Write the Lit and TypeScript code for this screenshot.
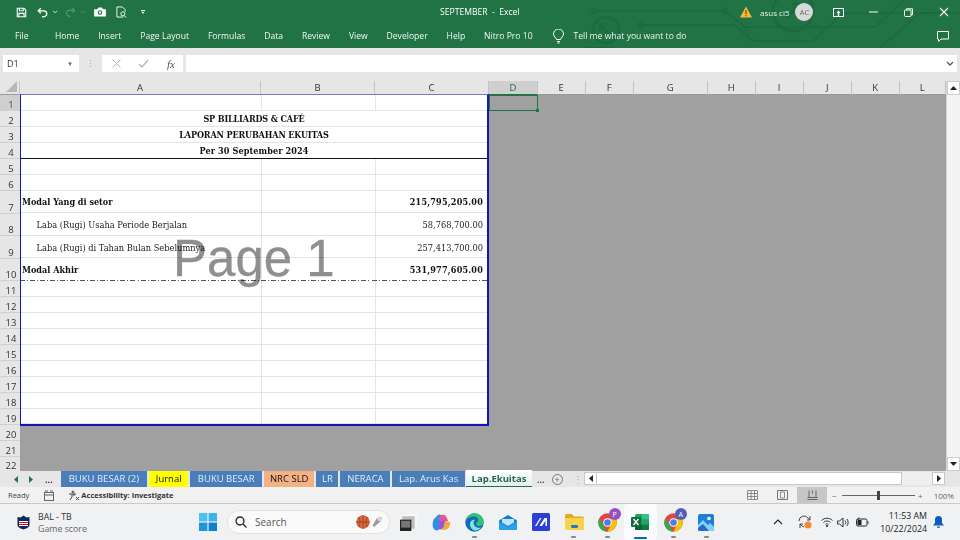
import { LitElement, html, css, svg } from "lit";
import { customElement } from "lit/decorators.js";

const COLS: [string, number][] = [["A",241],["B",114],["C",114],["D",48.7],["E",48],["F",48],["G",74],["H",48],["I",48],["J",48],["K",48],["L",46.300]];
type Row = { h:number; t?:string; a?:string; c?:string; b?:boolean; ind?:boolean; cls?:string };
const ROWS: Row[] = [
  {h:16},{h:16,t:"SP BILLIARDS & CAFÉ",cls:"caps"},{h:16,t:"LAPORAN PERUBAHAN EKUITAS",cls:"caps"},{h:16,t:"Per 30 September 2024",cls:"under"},
  {h:16},{h:16},
  {h:22.5,a:"Modal Yang di setor",c:"215,795,205.00",b:true},
  {h:22.5,a:"Laba (Rugi) Usaha Periode Berjalan",c:"58,768,700.00",ind:true},
  {h:22.5,a:"Laba (Rugi) di Tahan Bulan Sebelumnya",c:"257,413,700.00",ind:true},
  {h:22.5,a:"Modal Akhir",c:"531,977,605.00",b:true,cls:"dash"},
  {h:16},{h:16},{h:16},{h:16},{h:16},{h:16},{h:16},{h:16},{h:15},
];
const TABS = [
  ["BUKU BESAR (2)","blue",86.300],["Jurnal","yellow",39.500],["BUKU BESAR","blue",71.500],["NRC SLD","peach",50.500],
  ["LR","blue",22],["NERACA","blue",50],["Lap. Arus Kas","blue",72.500],["Lap.Ekuitas","active",66],
] as [string,string,number][];
const MENU = ["File","Home","Insert","Page Layout","Formulas","Data","Review","View","Developer","Help","Nitro Pro 10"];

@customElement("app-root")
export class AppRoot extends LitElement {
  static styles = css`
    :host{display:block;width:960px;height:540px;overflow:hidden;font-family:"Open Sans","Noto Sans",sans-serif;color:#222;background:#e6e6e6}
    *{box-sizing:border-box}
    svg{display:block;flex:none}
    .chrome{position:relative;background:#217346;height:48px;color:#fff;overflow:hidden}
    .circuit{position:absolute;left:0;top:0;pointer-events:none}
    .title{position:relative;height:24px;display:flex;align-items:center;padding-left:16px}
    .qat{display:flex;align-items:center;width:416px;flex:none}
    .qat svg{margin-right:var(--m,0)}
    .doc{font-size:8.6px;width:112px;flex:none;white-space:pre;padding-left:8px}
    .right{flex:1;display:flex;align-items:center;padding-left:196px}
    .user{font-size:8px;margin-left:8px;color:#e8f1ec;white-space:nowrap}
    .avatar{width:18px;height:18px;border-radius:50%;background:#d9d9d9;color:#666;font-size:7.5px;display:flex;align-items:center;justify-content:center;margin:0 0 0 6px;flex:none}
    .winbtns{display:flex;align-items:center;margin-left:8px}
    .winbtns div{width:35px;display:flex;justify-content:center}
    .menu{position:relative;height:24px;display:flex;align-items:center;padding-left:15px;font-size:8.6px;gap:18.9px;white-space:nowrap;color:#f2f7f4}
    .menu .file{margin-right:7.500px}
    .tell{display:flex;align-items:center;gap:8px;margin-left:1px;color:#eaf3ee}
    .cmt{position:absolute;right:11px;top:7px}
    .fbar{height:33px;display:flex;align-items:flex-start;padding:7px 3px 0 3px}
    .namebox{width:76px;height:17px;background:#fff;font-size:9px;display:flex;align-items:center;justify-content:space-between;padding:0 6px 0 4px;color:#333}
    .caret{font-size:6px;color:#666}
    .dots{width:23px;height:17px;display:flex;align-items:center;justify-content:center;color:#aaa;font-size:9px}
    .fbtns{width:81px;height:17px;background:#fff;display:flex;align-items:center;padding-left:10px;margin-right:3px}
    .fx{font:italic 11px "Liberation Serif",serif;color:#555;margin-left:18px}
    .finput{flex:1;height:17px;background:#fff;display:flex;align-items:center;justify-content:flex-end;padding-right:3px}
    .sheet{display:flex;height:390px;overflow:hidden}
    .main{flex:1;min-width:0;display:flex;flex-direction:column}
    .rowhead{width:20px;flex:none;background:#e6e6e6;display:flex;flex-direction:column;overflow:hidden}
    .corner{height:14px;flex:none;position:relative;border-bottom:1px solid #999;border-right:1px solid #c8c8c8}
    .corner i{position:absolute;right:2px;bottom:2px;width:0;height:0;border-left:11px solid transparent;border-bottom:11px solid #b9b9b9}
    .rh{flex:none;display:flex;align-items:flex-end;justify-content:center;font-size:9.5px;line-height:11px;color:#333;border-bottom:1px solid #d0d0d0;background:#e6e6e6;padding-left:2px}
    .rh.sel{background:#cfcfcf;color:#1f6b41}
    .rh.clip{border-bottom:0}
    .colhead{height:14px;display:flex;flex:none}
    .ch{flex:none;font-size:9.5px;line-height:13px;text-align:center;color:#333;background:#e6e6e6;border-right:1px solid #c4c4c4;border-bottom:1px solid #999}
    .ch.sel{background:#cfcfcf;border-bottom-color:#217346;color:#1f6b41}
    .body{position:relative;flex:1;background:#a0a0a0;min-height:0}
    .page{width:469px;margin-top:-1.500px;background:#fff;border:2px solid #1616b4;border-left-width:1.500px;border-top:1.500px solid #7a78c2;position:relative;font-family:"DejaVu Serif","Liberation Serif",serif;font-stretch:condensed;font-size:9.2px;color:#222}
    .r{display:grid;grid-template-columns:241px 114px 1fr;border-bottom:1px solid #e4e4e4;align-items:stretch}
    .r.merged{display:flex;justify-content:center;align-items:center;font-weight:700;font-size:9px;padding-top:2px;letter-spacing:.1px;color:#111}
    .r.caps{letter-spacing:-.15px}
    .r.under{border-bottom:1.500px solid #111}
    .r.dash{border-bottom:1px solid transparent;border-image:repeating-linear-gradient(90deg,#555 0 5px,transparent 5px 7px,#555 7px 8px,transparent 8px 10px) 1}
    .c{display:flex;align-items:center;border-right:1px solid #e4e4e4;padding:2px 1px 0;white-space:nowrap;min-width:0}
    .c:last-child{border-right:0;justify-content:flex-end;padding-right:4px}
    .bold{font-weight:700;font-size:9px;color:#111}
    .bold.num{letter-spacing:.2px}
    .ind{padding-left:15.500px}
    .wm{position:absolute;left:152px;top:134px;font:51px/60px "Liberation Sans",sans-serif;color:#8f8f8f;-webkit-text-stroke:.3px #8f8f8f;white-space:nowrap;pointer-events:none;mix-blend-mode:multiply}
    .cursor{position:absolute;left:469px;top:-.500px;width:49px;height:16.500px;border:1px solid #217346}
    .cursor::after{content:"";position:absolute;right:-2px;bottom:-2px;width:3px;height:3px;background:#217346}
    .vscroll{width:14px;flex:none;background:#f4f4f4;display:flex;flex-direction:column;justify-content:space-between;border-left:1px solid #d6d6d6}
    .arrowb{height:14px;background:#fff;display:flex;align-items:center;justify-content:center;border:1px solid #ccc}
    .tabs{height:16px;background:#e6e6e6;display:flex;align-items:stretch;position:relative}
    .nav{width:60.700px;flex:none;display:flex;align-items:center;padding-left:14px;gap:11px;font-size:10px;color:#333}
    .tab{flex:none;margin-right:2px;display:flex;align-items:center;justify-content:center;font-size:9.500px;color:#111;white-space:nowrap;padding-bottom:1.500px}
    .tab.blue{background:#4a7ebb;color:#e3ebf5}
    .tab.yellow{background:#ffff00}
    .tab.peach{background:#f4b183}
    .tab.active{background:linear-gradient(#fff,#e4edf6);color:#1e6b41;font-weight:700;border-bottom:1.500px solid #217346;margin-top:-1px;height:17px;margin-left:-1px;padding-bottom:0}
    .tabend{display:flex;align-items:center;font-size:10px;color:#444;margin-left:3px;gap:7px}
    .plus{width:11px;height:11px;border:1px solid #777;border-radius:50%;display:flex;align-items:center;justify-content:center;font-size:9px;line-height:1;color:#666}
    .hscroll{position:absolute;left:584px;right:15px;top:1px;height:13px;display:flex}
    .hb{width:13px;background:#fff;border:1px solid #c8c8c8;display:flex;align-items:center;justify-content:center}
    .ht{width:305px;background:#fff;border:1px solid #c8c8c8;border-left:0}
    .ha{flex:1;background:#efefef}
    .status{height:17px;background:#f1f1f1;border-bottom:1px solid #c9c9c9;display:flex;align-items:center;font-size:7.500px;color:#444;padding-left:8px;position:relative}
    .acc{display:flex;align-items:center;gap:1px;margin-left:14px;font-weight:700;color:#333;font-size:7.500px}
    .views{position:absolute;left:737px;top:0;height:16px;display:flex}
    .views div{width:30px;display:flex;align-items:center;justify-content:center;height:16px}
    .views .on{background:#c6c6c6}
    .zoom{position:absolute;left:832px;top:0;height:16px;display:flex;align-items:center;width:122px;color:#666;font-size:8px}
    .track{width:74px;height:1px;background:#666;margin:0 3px 0 5px;position:relative;border-top:1px solid #666}
    .track i{position:absolute;left:35px;top:-5px;width:3px;height:9px;background:#444}
    .pct{margin-left:11px}
    .taskbar{height:36px;background:#eff1f3;display:flex;align-items:center;position:relative}
    .score{display:flex;align-items:center;width:199px;flex:none;padding-left:17px;gap:8px;font-size:8.800px;color:#333;line-height:12px;padding-top:1px}
    .score small{display:block;font-size:8.800px;color:#666}
    .search{width:163px;height:24px;flex:none;background:#fafafa;border:1px solid #e2e2e2;border-radius:12px;display:flex;align-items:center;padding-left:7px;gap:8px;font-size:10px;color:#555;margin-left:10px}
    .search .deco{margin-left:auto;margin-right:6px;display:flex;align-items:center;gap:1px}
    .tk{width:33.100px;height:36px;flex:none;display:flex;align-items:center;justify-content:center;position:relative}
    .tk.first{margin-left:2px}
    .tk.run::after{content:"";position:absolute;bottom:2px;left:14px;width:5px;height:2px;border-radius:1px;background:#888}
    .tk.act{background:#fafbfc;border-radius:4px}
    .tk.act::after{content:"";position:absolute;bottom:1px;left:10px;width:13px;height:2.500px;border-radius:1px;background:#0067c0}
    .tray{position:absolute;left:768px;top:0;height:36px;display:flex;align-items:center}
    .tray>svg{margin-right:var(--m,0)}
    .clock{position:absolute;left:111px;width:48px;top:6px;text-align:right;font-size:8.800px;line-height:12.500px;color:#222;white-space:nowrap}
    .bell{position:absolute;left:933px;top:12px}
    .badge{position:absolute;left:18px;top:4px;width:12px;height:12px;border-radius:50%;color:#fff;font-size:7px;display:flex;align-items:center;justify-content:center}
  `;

  circuit(){
    return svg`<svg class="circuit" width="960" height="48" viewBox="0 0 960 48" fill="none" stroke="#1c6a3f" stroke-width="1.600">
      <path d="M596 11H725l20 16h130l30-27"/><path d="M640 25h95l18 16h60l30-28h90"/><path d="M880 48l40-35h40"/>
      <circle cx="592" cy="11" r="2.500"/><circle cx="725" cy="11" r="2.500"/><circle cx="641" cy="25" r="2.500"/><circle cx="746" cy="32" r="2.500"/>
      <circle cx="606" cy="30" r="13" stroke-width="2.500"/><path d="M612 36l-12-12m0 7v-7h7" stroke-width="2"/>
      <circle cx="793" cy="11" r="20" stroke-width="3"/><path d="M786 18l14-14m-8 0h8v8" stroke-width="2.500"/>
      <path d="M585 48h30" /></svg>`;
  }
  qat(){
    return html`<div class="qat">
      <svg width="11" height="11" viewBox="0 0 13 13" fill="none" stroke="#fff" stroke-width="1.300" style="--m:10px"><path d="M1.500 1.500h8l2 2v8h-10z"/><path d="M4 1.500v3h4.500v-3M3.500 11.500v-4h6v4"/></svg>
      <svg width="11" height="11" viewBox="0 0 13 12" fill="none" stroke="#fff" stroke-width="1.600"><path d="M4.500 1L1.500 4l3 3"/><path d="M2 4h6a3.500 3.500 0 0 1 0 7H6"/></svg>
      <svg width="6" height="4" viewBox="0 0 7 5" fill="none" stroke="#fff" style="--m:7px;margin-left:4px"><path d="M1 1l2.500 2.500L6 1"/></svg>
      <svg width="11" height="10" viewBox="0 0 13 12" fill="none" stroke="#4f9a72" stroke-width="1.300"><path d="M8.500 1l3 3-3 3"/><path d="M11 4H5a3.500 3.500 0 0 0 0 7h2"/></svg>
      <svg width="6" height="4" viewBox="0 0 7 5" fill="none" stroke="#4f9a72" style="--m:8px;margin-left:4px"><path d="M1 1l2.500 2.500L6 1"/></svg>
      <svg width="12" height="10" viewBox="0 0 13 11" style="--m:10px"><path fill="#fff" d="M0 2.500h3.500L5 .5h3.500l1.500 2h3v8H0z"/><circle cx="6.500" cy="6" r="2.400" fill="#217346"/><circle cx="6.500" cy="6" r="1.200" fill="#fff"/></svg>
      <svg width="11" height="12" viewBox="0 0 12 13" fill="none" stroke="#fff" stroke-width="1"><path d="M8 12H1V1h6l3 3v2"/><circle cx="7.500" cy="8.500" r="2.200"/><path d="M9 10.500l2 2"/></svg>
      <svg width="4" height="5" viewBox="0 0 5 6" style="margin-left:14px"><path fill="#fff" d="M0 0h5v1H0zM.5 2h4L2.500 5z"/></svg>
    </div>`;
  }
  render(){
    return html`
    <div class="chrome">
      ${this.circuit()}
      <div class="title">
        ${this.qat()}
        <div class="doc">SEPTEMBER  -  Excel</div>
        <div class="right">
          <svg width="12" height="12" viewBox="0 0 12 12"><path fill="#f6b73c" d="M6 .5L12 11.500H0z"/><path fill="#7a4b00" d="M5.400 4h1.200v4.200H5.400zM5.400 9h1.200v1.200H5.400z"/></svg>
          <span class="user">asus ci5</span>
          <div class="avatar">AC</div>
          <div class="winbtns">
            <div><svg width="11" height="9" viewBox="0 0 11 9" fill="none" stroke="#fff"><rect x=".5" y=".5" width="10" height="8"/><path fill="#fff" d="M5.500 2.500L3.500 5h1.300v3h1.400V5h1.300z" stroke="none"/></svg></div>
            <div><svg width="9" height="2" viewBox="0 0 9 2"><path stroke="#fff" d="M0 1h9"/></svg></div>
            <div><svg width="9" height="9" viewBox="0 0 9 9" fill="none" stroke="#fff"><rect x=".5" y="2" width="6.500" height="6.500" rx="1"/><path d="M2.500 2V.8h6v6H7"/></svg></div>
            <div><svg width="10" height="10" viewBox="0 0 10 10" stroke="#fff" stroke-width="1.100"><path d="M1 1l8 8M9 1l-8 8"/></svg></div>
          </div>
        </div>
      </div>
      <div class="menu">
        ${MENU.map((m,i)=>html`<span class=${i===0?"file":""}>${m}</span>`)}
        <div class="tell">
          <svg width="13" height="15" viewBox="0 0 13 15" fill="none" stroke="#fff"><path d="M4.500 10.500C4 8.500 1.500 7.500 1.500 5a5 5 0 0 1 10 0c0 2.500-2.500 3.500-3 5.500z"/><path d="M5 12.500h3M5.500 14h2"/></svg>
          <span>Tell me what you want to do</span>
        </div>
        <svg class="cmt" width="12" height="11" viewBox="0 0 12 11" fill="none" stroke="#fff"><path d="M.5.5h11v7.500H4L1.500 10.500V8H.5z"/></svg>
      </div>
    </div>
    <div class="fbar">
      <div class="namebox"><span>D1</span><span class="caret">▼</span></div>
      <div class="dots">⋮</div>
      <div class="fbtns">
        <svg width="9" height="9" viewBox="0 0 9 9" stroke="#b5b5b5"><path d="M.5.5l8 8M8.500.5l-8 8"/></svg>
        <svg style="margin-left:17px" width="11" height="9" viewBox="0 0 11 9" fill="none" stroke="#b5b5b5" stroke-width="1.200"><path d="M1 5l3 3 6-7"/></svg>
        <span class="fx">fx</span>
      </div>
      <div class="finput"><svg width="8" height="5" viewBox="0 0 8 5" fill="none" stroke="#555" stroke-width="1.300"><path d="M1 1l3 3 3-3"/></svg></div>
    </div>
    <div class="sheet">
      <div class="rowhead">
        <div class="corner"><i></i></div>
        ${ROWS.map((r,i)=>html`<div class="rh ${i===0?"sel":""}" style="height:${i===18?16:r.h}px">${i+1}</div>`)}
        ${[20,21].map((n)=>html`<div class="rh" style="height:16px">${n}</div>`)}
        <div class="rh clip" style="height:14px">22</div>
      </div>
      <div class="main">
        <div class="colhead">
          ${COLS.map(([n,w])=>html`<div class="ch ${n==="D"?"sel":""}" style="width:${w}px">${n}</div>`)}
        </div>
        <div class="body">
          <div class="page">
            ${ROWS.map(r=> r.t
              ? html`<div class="r merged ${r.cls||""}" style="height:${r.h}px">${r.t}</div>`
              : html`<div class="r ${r.cls||""}" style="height:${r.h}px">
                  <div class="c ${r.b?"bold":""} ${r.ind?"ind":""}">${r.a||""}</div>
                  <div class="c"></div>
                  <div class="c ${r.b?"bold":""} num">${r.c||""}</div>
                </div>`)}
            <div class="wm">Page 1</div>
          </div>
          <div class="cursor"></div>
        </div>
      </div>
      <div class="vscroll">
        <div class="arrowb"><svg width="7" height="4" viewBox="0 0 7 4"><path d="M3.500 0L7 4H0z" fill="#222"/></svg></div>
        <div class="arrowb"><svg width="7" height="4" viewBox="0 0 7 4"><path d="M0 0h7L3.500 4z" fill="#222"/></svg></div>
      </div>
    </div>
    <div class="tabs">
      <div class="nav"><svg width="4" height="7" viewBox="0 0 4 7"><path d="M4 0v7L0 3.500z" fill="#217346"/></svg><svg width="4" height="7" viewBox="0 0 4 7"><path d="M0 0v7l4-3.500z" fill="#217346"/></svg><span style="font-weight:700;font-size:9px;margin-left:1px">...</span></div>
      ${TABS.map(([n,c,w])=>html`<div class="tab ${c}" style="width:${w}px">${n}</div>`)}
      <div class="tabend"><span style="font-weight:700;font-size:9px">...</span><span class="plus">+</span><span style="color:#aaa;margin-left:3px">⋮</span></div>
      <div class="hscroll">
        <div class="hb"><svg width="4" height="7" viewBox="0 0 4 7"><path d="M4 0v7L0 3.500z" fill="#222"/></svg></div>
        <div class="ht"></div><div class="ha"></div>
        <div class="hb"><svg width="4" height="7" viewBox="0 0 4 7"><path d="M0 0v7l4-3.500z" fill="#222"/></svg></div>
      </div>
    </div>
    <div class="status">
      <span>Ready</span>
      <svg style="margin-left:15px" width="10" height="11" viewBox="0 0 10 11" fill="none" stroke="#666"><rect x=".5" y="2.500" width="9" height="8"/><path d="M.5 5h9M1 1h3M6 1h3" /></svg>
      <div class="acc">
        <svg width="12" height="11" viewBox="0 0 12 11" fill="none" stroke="#444"><circle cx="5" cy="2" r="1"/><path d="M1 4h7M4 4v3l-2 3M6 4v2M8 7l3 3m0-3l-3 3"/></svg>
        <span>Accessibility: Investigate</span>
      </div>
      <div class="views">
        <div><svg width="11" height="10" viewBox="0 0 11 10" fill="none" stroke="#777" stroke-width=".8"><path d="M.5.5h10v9H.5zM.5 3.500h10M.5 6.500h10M4 .5v9M7.500.5v9"/></svg></div>
        <div><svg width="11" height="10" viewBox="0 0 11 10" fill="none" stroke="#777"><path d="M.5.5h10v9H.5z"/><path d="M3.500 2v6h4V2z" stroke-width=".8"/></svg></div>
        <div class="on"><svg width="11" height="10" viewBox="0 0 11 10" fill="none" stroke="#666"><path d="M.5 7.500h10M2 7.500V.5M9 7.500V.5M5.500.5v3"/><path d="M.5 9.500h10"/></svg></div>
      </div>
      <div class="zoom"><span>−</span><div class="track"><i></i></div><span>+</span><span class="pct">100%</span></div>
    </div>
    <div class="taskbar">
      <div class="score">
        <svg width="13" height="15" viewBox="0 0 13 15"><path fill="#0b2a5b" d="M.5 2l3 .4L6.500 .5l3 1.900 3-.4v8c0 2-3 3.500-6 4.500-3-1-6-2.500-6-4.500z"/><rect x="2" y="6" width="9" height="5" fill="#fff"/><path d="M2 7.500h9M2 9.500h9" stroke="#c8102e" stroke-width="1.200"/></svg>
        <div>BAL - TB<small>Game score</small></div>
      </div>
      <svg width="18" height="18" viewBox="0 0 18 18"><rect width="8.400" height="8.400" fill="#4cc2f1"/><rect x="9.600" width="8.400" height="8.400" fill="#3cb3ee"/><rect y="9.600" width="8.400" height="8.400" fill="#1c95de"/><rect x="9.600" y="9.600" width="8.400" height="8.400" fill="#0f7fd0"/></svg>
      <div class="search">
        <svg width="12" height="12" viewBox="0 0 12 12" fill="none" stroke="#222" stroke-width="1.300"><circle cx="5" cy="5" r="4"/><path d="M8 8l3.500 3.500"/></svg>
        <span>Search</span>
        <span class="deco">
          <svg width="14" height="14" viewBox="0 0 14 14"><circle cx="7" cy="7" r="6.800" fill="#d9683a"/><path d="M7 0v14M0 7h14M2.500 2c2 3 2 7 0 10M11.500 2c-2 3-2 7 0 10" fill="none" stroke="#7a3116" stroke-width=".6"/></svg>
          <svg width="12" height="12" viewBox="0 0 12 12"><path fill="#9a9a9a" d="M3 11L1.500 9.500 6 2l5-1-1 4z"/><path fill="#d8d8d8" d="M6 2l5-1-1 4-3 0z"/></svg>
        </span>
      </div>
      <div class="tk first"><svg width="17" height="17" viewBox="0 0 15 15"><rect x="4" y="0" width="11" height="11" fill="#f8f8f8"/><rect x="2" y="2" width="11" height="11" fill="#bdbdbd"/><rect x="0" y="5" width="10" height="10" fill="#222"/><rect x="1" y="6" width="8" height="6" fill="#777"/></svg></div>
      <div class="tk"><svg width="19" height="17" viewBox="0 0 19 17"><path fill="#2f8fe6" d="M6 1c2-1 4 0 4 2L8 14c-1 2-3 3-5 2C0 14 0 9 2 5z"/><path fill="#e6569b" d="M9 1c3-1 5 0 6 3l1 3-7 1-3-3z"/><path fill="#8c5cd6" d="M7 8l6-2 1 5-4 4c-2 1-4 0-4-2z"/><path fill="#f2a93b" d="M13 7l5 1c1 4-2 8-6 8H9c2-1 3-3 3-5z"/></svg></div>
      <div class="tk run"><svg width="19" height="19" viewBox="0 0 19 19"><circle cx="9.500" cy="9.500" r="9.200" fill="#0f6cbd"/><path fill="#35c36f" d="M1 8C2 3 6 .3 9.500.3c5 0 9.200 4 9.200 8.700 0 2.500-2 4-4.500 4-2 0-3-1-3-2 0-2 2-2 2-4 0-2-2-3.500-4-3.500C6 3.500 2 5 1 8z"/><path fill="#7fe3e0" d="M5 11c0-3 3-5 5-4-2 1-2 5 1 7 2 1 4 1 5 .5-1.500 2-4 3.300-6 3C7 17 5 14 5 11z"/></svg></div>
      <div class="tk"><svg width="18" height="15" viewBox="0 0 18 15"><path fill="#0f7fd0" d="M0 5.500L9 0l9 5.500V15H0z"/><path fill="#2aa0e8" d="M0 6.500l9 5.500 9-5.500V15H0z"/><path fill="#bfe3f8" d="M3 4h12v3.500L9 11 3 7.500z"/></svg></div>
      <div class="tk"><svg width="18" height="18" viewBox="0 0 18 18"><rect width="18" height="18" rx="1.500" fill="#2b3fd6"/><path fill="#fff" d="M3 13l5-8h1.500L4.500 13zM7.500 13l5-8H15v8h-1.500V7.500L10 13z"/></svg></div>
      <div class="tk run"><svg width="19" height="16" viewBox="0 0 19 16"><path fill="#e4a91f" d="M0 1.500A1.500 1.500 0 0 1 1.500 0H7l2 2.500h8.500A1.500 1.500 0 0 1 19 4v2H0z"/><path fill="#fbd34b" d="M0 4h19v10.500a1.500 1.500 0 0 1-1.500 1.500h-16A1.500 1.500 0 0 1 0 14.500z"/><rect x="6" y="11" width="7" height="3" rx="1" fill="#1b7fc4"/></svg></div>
      <div class="tk run">${this.chrome()}<span class="badge" style="background:#9a4fc0">P</span></div>
      <div class="tk act"><svg width="18" height="16" viewBox="0 0 18 16"><rect x="4" width="14" height="16" rx="1.500" fill="#21a366"/><rect x="11" width="7" height="5.300" fill="#33c481"/><rect x="11" y="10.700" width="7" height="5.300" fill="#107c41"/><rect x="4" y="10.700" width="7" height="5.300" fill="#185c37"/><rect y="3" width="10" height="10" rx="1" fill="#0f6b3b"/><path d="M2.500 5l5 6M7.500 5l-5 6" stroke="#fff" stroke-width="1.300"/></svg></div>
      <div class="tk run">${this.chrome()}<span class="badge" style="background:#5460b8">A</span></div>
      <div class="tk run"><svg width="16" height="17" viewBox="0 0 16 17"><rect width="16" height="17" rx="2" fill="#1f7fd6"/><path fill="#7fd4f7" d="M0 11l5-5 5 5 2-2 4 4v2a2 2 0 0 1-2 2H2a2 2 0 0 1-2-2z"/><circle cx="11" cy="4.500" r="1.800" fill="#fff"/><path fill="#2f66c8" d="M0 14l5-4 6 7H2a2 2 0 0 1-2-2z"/></svg></div>
      <div class="tray">
        <svg style="--m:15px;margin-left:5px" width="10" height="6" viewBox="0 0 10 6" fill="none" stroke="#222" stroke-width="1.100"><path d="M1 5l4-4 4 4"/></svg>
        <svg style="--m:9px" width="14" height="14" viewBox="0 0 14 14" fill="none" stroke="#444"><path d="M1 6a5 5 0 0 1 9-3l2 2M12 1v4H9M2 9l2 2a5 5 0 0 0 2 1M2 13V9h3"/><circle cx="10" cy="10" r="3.500" fill="#f28c28" stroke="none"/></svg>
        <svg style="--m:4px" width="12" height="10" viewBox="0 0 12 10" fill="none" stroke="#333"><path d="M.5 3.500c3-3 8-3 11 0M2.500 5.500c2-2 5-2 7 0M4.500 7.500c1-1 2-1 3 0"/><circle cx="6" cy="9" r=".7" fill="#333"/></svg>
        <svg style="--m:7px" width="12" height="11" viewBox="0 0 12 11" fill="none" stroke="#333"><path d="M.5 4v3h2L6 10V1L2.500 4z"/><path d="M8 3.500c1 1 1 3 0 4M10 2c1.500 2 1.500 5 0 7"/></svg>
        <svg width="13" height="10" viewBox="0 0 13 10" fill="none" stroke="#222"><rect x=".5" y="2" width="10.500" height="7" rx="1.500"/><rect x="2" y="3.500" width="3" height="4" fill="#222"/><path d="M12 4.500v2M3 .5L1.500 3" /></svg>
        <span class="clock">11:53 AM<br/>10/22/2024</span>
      </div>
      <svg class="bell" width="11" height="12" viewBox="0 0 11 12"><path fill="#0f5cc0" d="M5.500 0a3.500 3.500 0 0 1 3.500 3.500V7l2 2.500H0L2 7V3.500A3.500 3.500 0 0 1 5.500 0z"/><path fill="#0f5cc0" d="M4 10.500h3a1.500 1.500 0 0 1-3 0z"/></svg>
    </div>`;
  }
  chrome(){
    return svg`<svg width="19" height="19" viewBox="0 0 19 19"><circle cx="9.500" cy="9.500" r="9.300" fill="#e7453c"/><path fill="#2faa4f" d="M1.500 5L6 13l3 5.800A9.300 9.300 0 0 1 1.500 5z"/><path fill="#f4c20d" d="M18 6H9.500l3.500 5-3.500 7.800A9.300 9.300 0 0 0 18 6z"/><circle cx="9.500" cy="9.500" r="4.300" fill="#fff"/><circle cx="9.500" cy="9.500" r="3.300" fill="#3f82ee"/></svg>`;
  }
}
